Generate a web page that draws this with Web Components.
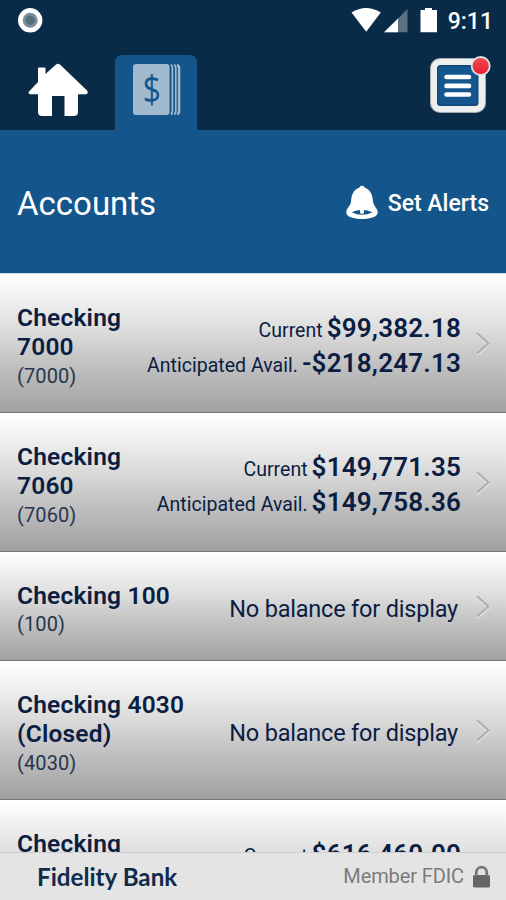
<!DOCTYPE html>
<html lang="en"><head><meta charset="utf-8"><title>Accounts</title>
<style>html,body{margin:0;height:900px;overflow:hidden;font-family:Roboto,"Liberation Sans",sans-serif}</style></head>
<body><bank-app></bank-app>
<script>
const define=(name,html)=>{const t=document.createElement('template');t.innerHTML=html;
 customElements.define(name,class extends HTMLElement{constructor(){super();this.attachShadow({mode:'open'}).append(t.content.cloneNode(true));}});};

define('status-bar',`<style>
:host{display:flex;height:40px;align-items:center;padding:0 13px 0 18px;box-sizing:border-box;color:#fff}
.s{flex:1}.time{font-size:23px;font-weight:500;line-height:40px;padding-top:4px;margin-left:11px}
svg{display:block}</style>
<svg width="25" height="40" viewBox="0 0 25 40"><circle cx="12.2" cy="20.3" r="12.2" fill="#fff"/><circle cx="12.2" cy="20.3" r="7.5" fill="#7b8d99"/><circle cx="12.2" cy="20.3" r="4.6" fill="#566d7c"/></svg>
<span class="s"></span>
<svg width="86" height="40" viewBox="351 0 86 40"><path d="M351.5 12.5Q366 3.5 380.8 12.5L366.2 31.8Z" fill="#fff"/><path d="M407.500 9V32.300H384Z" fill="#5b7080"/><path d="M398 18.500V32.300H384Z" fill="#fff"/><path d="M425 8h7v2h5v22.300h-16.500V10h4.500z" fill="#fff"/></svg>
<span class="time">9:11</span>`);

define('nav-bar',`<style>
:host{display:flex;height:90px;align-items:flex-end;box-sizing:border-box}
svg{display:block}.home{margin-left:28px}.tab{margin-left:27px;width:82px;height:75px;background:#14568b;border-radius:7px 7px 0 0}.menu{margin:0 14px 0 auto}</style>
<svg class="home" width="60" height="75" viewBox="28 55 60 75"><path d="M56 64.500Q58 63 60 64.500L87 90.500Q89 93.500 86 94.300H78V112Q78 116 74 116H64.500V96H52V116H42Q38 116 38 112V94.300H30Q27.500 93.500 29 91.500L38 82V68.500Q38 67.500 39 67.500H44.500Q45.500 67.500 45.500 68.500V74Z" fill="#fff"/></svg>
<div class="tab"><svg width="82" height="75" viewBox="115 55 82 75"><rect x="133" y="64" width="36.500" height="51" rx="3" fill="#a1bad0"/><g fill="none" stroke="#a1bad0"><path d="M170.800 64.500q1.600 1 1.600 3.500v43q0 2.500-1.600 3.500M174 64.500q1.800 1 1.800 3.500v43q0 2.500-1.800 3.500" stroke-width="1.700"/><path d="M177 64.800q2.100.8 2.100 3.200v43q0 2.500-2.100 3.200" stroke-width="2.400"/></g><text transform="translate(151.800 102.500) scale(.84 1)" text-anchor="middle" font-family="Open Sans" font-size="38" fill="#14568b">$</text></svg></div>
<svg class="menu" width="64" height="75" viewBox="428 55 64 75"><defs><linearGradient id="r" x2="0" y2="1"><stop stop-color="#f34b55"/><stop offset="1" stop-color="#e71d2e"/></linearGradient></defs><rect x="430" y="58" width="56" height="55" rx="10" fill="#a5acb1"/><rect x="431" y="59" width="54" height="53" rx="9" fill="#edeeee"/><rect x="437" y="65" width="41.500" height="41" rx="3.500" fill="#0d467a"/><rect x="438.500" y="66.500" width="39" height="38" rx="2" fill="#15568e"/><path d="M446.500 77h22.500M446.500 85.900h22.500M446.500 94.500h22.500" stroke="#fff" stroke-width="4.600" stroke-linecap="round"/><circle cx="480.700" cy="66" r="9" fill="url(#r)" stroke="#dfe0e2" stroke-width="1.800"/></svg>`);

define('page-heading',`<style>
:host{display:flex;height:144px;box-sizing:border-box;align-items:center;background:#14568b;color:#fff;padding:4px 17px 0 17px;border-bottom:1px solid #cdd9e4}
.t{font-size:33px;letter-spacing:0}.a{margin-left:auto;display:flex;align-items:center;gap:10px;font-size:23px;font-weight:500}
svg{display:block;margin-top:-2px}</style><span class="t"><slot name="title"></slot></span>
<span class="a"><svg width="32" height="36" viewBox="346 185 32 36"><path d="M362 185.800c1.800 0 2.500 1 2.700 2 5.800 1.700 7.800 7 8.200 13.200.3 5 4.800 7 4.800 11.500 0 4.200-7 6.500-15.700 6.500s-15.700-2.300-15.700-6.500c0-4.500 4.500-6.500 4.800-11.500.4-6.200 2.400-11.500 8.200-13.200.2-1 .9-2 2.700-2z" fill="#fff"/><path d="M351.500 212.200q10.500-5 21 0q-10.500 5-21 0z" fill="#14568b"/><rect x="360" y="208.500" width="4" height="5.500" rx="2" fill="#fff"/></svg><slot name="action"></slot></span>`);

define('balance-line',`<style>:host{display:flex;justify-content:flex-end;align-items:baseline;gap:4px;height:35.500px;line-height:35.500px;white-space:nowrap;font-size:19.500px;letter-spacing:.02px}b{font-size:26px;font-weight:600;letter-spacing:.2px}</style><span><slot></slot></span><b><slot name="amount"></slot></b>`);

define('account-row',`<style>
:host{display:flex;box-sizing:border-box;padding:28.800px 14px 23.600px 17px;border-bottom:1px solid #747474;background:linear-gradient(#fff 0,#f5f5f5 12%,#dfdfdf 38%,#c1c1c1 66%,#a1a1a1 100%);color:#0b1d43;align-items:center}
.n{flex:1;font-size:24.500px;letter-spacing:.2px;font-weight:600;line-height:29.200px}.id{font-size:20px;letter-spacing:.1px;line-height:24px;padding:2.400px 0 .5px;font-weight:400;color:#26364f}
.v{text-align:right;font-size:23.500px;letter-spacing:-.2px;margin:1px 14px 0 0}
::slotted(.none){display:block;padding:0 3px 1px 0}
svg{display:block;margin:-3px 0 0 0}
</style><div class="n"><slot name="name"></slot><div class="id"><slot name="id"></slot></div></div>
<div class="v"><slot></slot></div>
<svg width="17" height="26" viewBox="0 0 17 26"><path d="M2 3.800L13.500 14L2 24.300" fill="none" stroke="#dedede" stroke-width="2.600"/><path d="M2 2L13.500 12.500L2 22.500" fill="none" stroke="#adadad" stroke-width="1.800"/></svg>`);

define('bank-footer',`<style>
:host{display:flex;align-items:center;height:48px;box-sizing:border-box;border-top:1px solid #d0d0d0;background:#e4e4e4;padding:0 16px 1px 37px}
.b{font:700 24.200px Lato,sans-serif;color:#102b4b}.m{margin-left:auto;font-size:20px;letter-spacing:-.1px;color:#7b7b7b}svg{margin-left:9px}</style>
<span class="b"><slot></slot></span><span class="m"><slot name="member"></slot></span>
<svg width="17" height="23" viewBox="0 0 17 23"><rect y="10" width="17" height="12.500" rx="1.500" fill="#666"/><path d="M3.300 11V7.300a5.200 5.200 0 0 1 10.400 0V11" fill="none" stroke="#777" stroke-width="2.800"/></svg>`);

define('bank-app',`<style>
:host{display:flex;flex-direction:column;width:506px;height:900px;overflow:hidden;background:#0a2b47}
.list{flex:1;min-height:0;overflow:hidden}
.two{height:139px}.one{height:109.200px}</style>
<status-bar></status-bar><nav-bar></nav-bar>
<page-heading><span slot="title">Accounts</span><span slot="action">Set Alerts</span></page-heading>
<div class="list">
<account-row class="two"><span slot="name">Checking<br>7000</span><span slot="id">(7000)</span><balance-line>Current<span slot="amount">$99,382.18</span></balance-line><balance-line>Anticipated Avail.<span slot="amount">-$218,247.13</span></balance-line></account-row>
<account-row class="two"><span slot="name">Checking<br>7060</span><span slot="id">(7060)</span><balance-line>Current<span slot="amount">$149,771.35</span></balance-line><balance-line>Anticipated Avail.<span slot="amount">$149,758.36</span></balance-line></account-row>
<account-row class="one"><span slot="name">Checking 100</span><span slot="id">(100)</span><span class="none">No balance for display</span></account-row>
<account-row class="two"><span slot="name">Checking 4030<br>(Closed)</span><span slot="id">(4030)</span><span class="none">No balance for display</span></account-row>
<account-row class="two"><span slot="name">Checking<br>&nbsp;</span><span slot="id">&nbsp;</span><balance-line>Current<span slot="amount">$616,460.00</span></balance-line><balance-line></balance-line></account-row>
</div>
<bank-footer>Fidelity Bank<span slot="member">Member FDIC</span></bank-footer>`);
</script></body></html>
